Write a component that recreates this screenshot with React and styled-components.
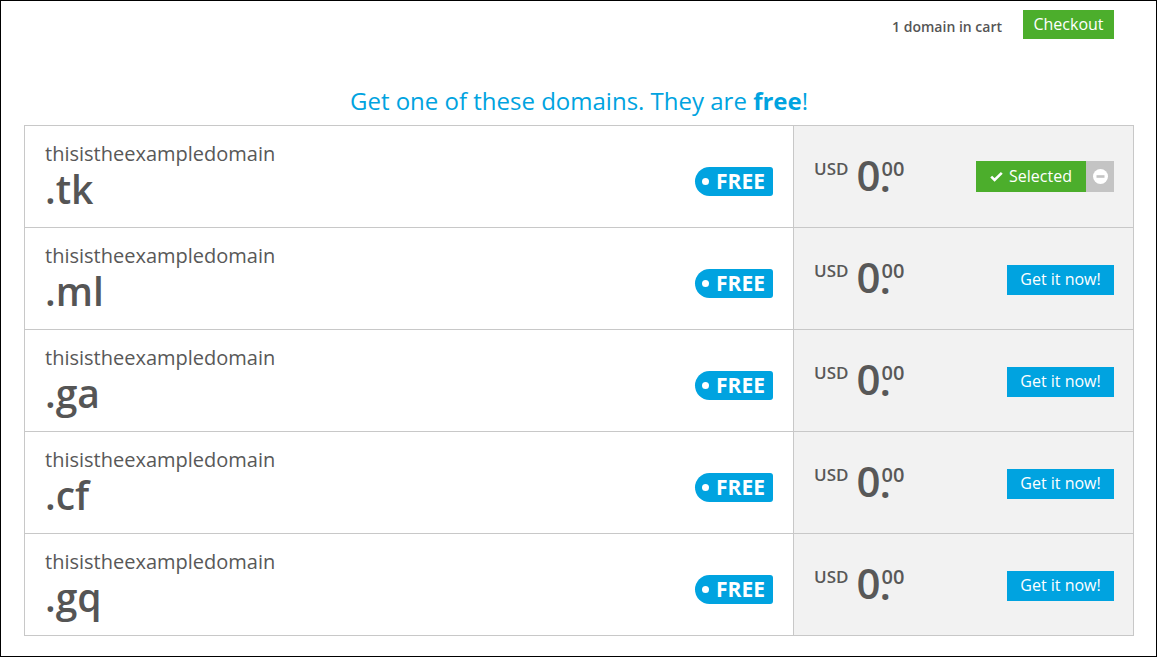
import React from "react";
import styled, { createGlobalStyle } from "styled-components";

const Global = createGlobalStyle`
  html, body { margin: 0; padding: 0; background: #fff; }
  * { box-sizing: border-box; }
`;

const BLUE = "#00a3e0";
const GREEN = "#4cae2c";
const TEXT = "#585858";

const Frame = styled.div`
  width: 1157px;
  height: 657px;
  border: 1px solid #000;
  background: #fff;
  font-family: "Open Sans", "Liberation Sans", sans-serif;
  color: ${TEXT};
  padding: 9px 22px 0 23px;
`;

const TopBar = styled.div`
  display: flex;
  justify-content: flex-end;
  align-items: center;
  gap: 21px;
  padding-right: 20px;
`;

const CartInfo = styled.span`
  font-size: 14px;
  font-weight: 600;
  color: #555;
  padding-top: 3px;
`;

const CheckoutButton = styled.button`
  height: 29px;
  width: 91px;
  border: none;
  background: ${GREEN};
  color: #fff;
  font-family: inherit;
  font-size: 16px;
  font-weight: 400;
  padding: 0 0 2px;
  cursor: pointer;
`;

const Heading = styled.h2`
  margin: 47px 0 9px;
  text-align: center;
  font-size: 24px;
  line-height: 30px;
  font-weight: 400;
  color: ${BLUE};
  b { font-weight: 700; }
`;

const Table = styled.div`
  border: 1px solid #c8c8c8;
`;

const Row = styled.div`
  display: grid;
  grid-template-columns: 768px 1fr;
  height: ${(p) => (p.$first ? 101 : 102)}px;
  border-top: ${(p) => (p.$first ? "none" : "1px solid #c8c8c8")};
`;

const NameCell = styled.div`
  display: flex;
  justify-content: space-between;
  align-items: flex-start;
  padding: 14px 20px 0 20px;
`;

const NameBlock = styled.div`
  display: flex;
  flex-direction: column;
`;

const Sld = styled.span`
  font-size: 20px;
  line-height: 27px;
`;

const Tld = styled.span`
  font-size: 39px;
  line-height: 40px;
  font-weight: 600;
  color: #555;
  margin-top: 2px;
`;

const FreeBadge = styled.span`
  margin-top: 27px;
  display: inline-flex;
  align-items: center;
  height: 29px;
  width: 78px;
  background: ${BLUE};
  border-radius: 15px 3px 3px 15px;
  color: #fff;
  font-size: 21px;
  font-weight: 700;
  padding-left: 7px;
  padding-bottom: 1px;
  &::before {
    content: "";
    width: 7px;
    height: 7px;
    border-radius: 50%;
    background: #fff;
    margin-right: 7px;
  }
`;

const PriceCell = styled.div`
  display: flex;
  align-items: center;
  justify-content: space-between;
  background: #f2f2f2;
  border-left: 1px solid #c8c8c8;
  padding: 0 19px 0 20px;
`;

const Price = styled.div`
  display: flex;
  align-items: flex-start;
  margin-top: -4px;
`;

const Currency = styled.span`
  font-size: 17px;
  font-weight: 600;
  line-height: 20px;
  margin-top: 6px;
  margin-right: 8px;
`;

const Amount = styled.span`
  font-size: 42px;
  font-weight: 600;
  line-height: 44px;
`;

const Decimals = styled.span`
  display: flex;
  flex-direction: column;
  align-items: flex-start;
  margin-left: 1px;
`;

const Cents = styled.span`
  font-size: 20px;
  font-weight: 600;
  line-height: 15px;
  margin-top: 8px;
`;

const Point = styled.span`
  display: block;
  font-size: 42px;
  font-weight: 600;
  line-height: 0;
  height: 0;
  margin-top: 0;
  margin-left: -2px;
`;

const ButtonGroup = styled.div`
  display: flex;
  height: 31px;
`;

const SelectedButton = styled.button`
  display: flex;
  align-items: center;
  justify-content: center;
  gap: 6px;
  width: 110px;
  height: 31px;
  border: none;
  background: ${GREEN};
  color: #fff;
  font-family: inherit;
  font-size: 16px;
  padding: 0 0 1px;
`;

const RemoveButton = styled.button`
  width: 28px;
  height: 31px;
  border: none;
  background: #c4c4c4;
  display: flex;
  align-items: center;
  justify-content: center;
  padding: 0;
`;

const GetButton = styled.button`
  width: 107px;
  height: 30px;
  border: none;
  background: ${BLUE};
  color: #fff;
  font-family: inherit;
  font-size: 16px;
  padding: 0 0 2px;
  margin-top: 2px;
`;

const Check = () => (
  <svg width="13" height="11" viewBox="0 0 13 11">
    <path d="M1.2 5.6 L4.6 9 L11.8 1.8" stroke="#fff" strokeWidth="2.6" fill="none" />
  </svg>
);

const Minus = () => (
  <svg width="15" height="15" viewBox="0 0 15 15">
    <circle cx="7.5" cy="7.5" r="7.5" fill="#fff" />
    <rect x="3.5" y="6.2" width="8" height="2.6" fill="#c4c4c4" />
  </svg>
);

const domains = [
  { tld: ".tk", selected: true },
  { tld: ".ml" },
  { tld: ".ga" },
  { tld: ".cf" },
  { tld: ".gq" },
];

export default function App() {
  return (
    <>
      <Global />
      <Frame>
        <TopBar>
          <CartInfo>1 domain in cart</CartInfo>
          <CheckoutButton>Checkout</CheckoutButton>
        </TopBar>
        <Heading>
          Get one of these domains. They are <b>free</b>!
        </Heading>
        <Table>
          {domains.map((d, i) => (
            <Row key={d.tld} $first={i === 0}>
              <NameCell>
                <NameBlock>
                  <Sld>thisistheexampledomain</Sld>
                  <Tld>{d.tld}</Tld>
                </NameBlock>
                <FreeBadge>FREE</FreeBadge>
              </NameCell>
              <PriceCell>
                <Price>
                  <Currency>USD</Currency>
                  <Amount>0</Amount>
                  <Decimals>
                    <Cents>00</Cents>
                    <Point>.</Point>
                  </Decimals>
                </Price>
                {d.selected ? (
                  <ButtonGroup>
                    <SelectedButton>
                      <Check />
                      Selected
                    </SelectedButton>
                    <RemoveButton>
                      <Minus />
                    </RemoveButton>
                  </ButtonGroup>
                ) : (
                  <GetButton>Get it now!</GetButton>
                )}
              </PriceCell>
            </Row>
          ))}
        </Table>
      </Frame>
    </>
  );
}
